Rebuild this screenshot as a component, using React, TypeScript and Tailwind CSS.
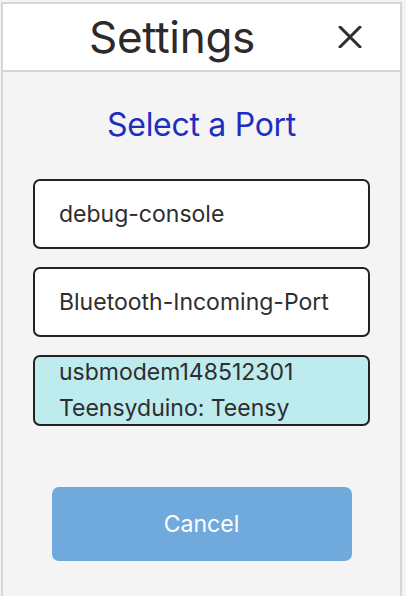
import React from "react"

const ports = [
  { id: "debug", lines: ["debug-console"] },
  { id: "bt", lines: ["Bluetooth-Incoming-Port"] },
  { id: "usb", lines: ["usbmodem148512301", "Teensyduino: Teensy"], selected: true },
]

export default function App() {
  return (
    <div
      className="h-[596px] w-[406px] bg-[#f4f4f4] pt-[2px] pl-[1px]"
      style={{ fontFamily: "Inter, 'Noto Sans', sans-serif" }}
    >
      <div className="flex h-[594px] w-[401px] flex-col border-t-2 border-r-2 border-l-2 border-[#d6d6d6]">
        <div className="flex h-[68px] items-center border-b-2 border-[#d6d6d6] bg-white">
          <div className="flex-1 pl-[3px] text-center text-[44px] leading-none tracking-[-0.3px] text-[#2b2b2b]">
            Settings
          </div>
          <button className="mr-[38px] flex h-[24px] w-[24px] items-center justify-center text-[#2f2f2f]">
            <svg width="24" height="22" viewBox="0 0 24 22" fill="none">
              <path d="M2 1 L22 21 M22 1 L2 21" stroke="currentColor" strokeWidth="3" strokeLinecap="round" />
            </svg>
          </button>
        </div>

        <div className="flex flex-1 flex-col items-center">
          <h2 className="mt-[37px] text-[32px] leading-none tracking-[-0.3px] text-[#1d2fbf]">Select a Port</h2>

          <div className="mt-[38px] flex w-[337px] flex-col gap-[18px]">
            {ports.map((p) =>
              p.selected ? (
                <div
                  key={p.id}
                  className="flex h-[71px] flex-col rounded-[7px] border-2 border-[#222] bg-[#bdebee] pl-[24px] text-[23px] leading-[36px] text-[#2e2e2e]"
                >
                  <div className="-mt-[3px]">{p.lines[0]}</div>
                  <div>{p.lines[1]}</div>
                </div>
              ) : (
                <div
                  key={p.id}
                  className="flex h-[70px] items-center rounded-[7px] border-2 border-[#222] bg-white pl-[24px] text-[23px] text-[#2e2e2e]"
                >
                  {p.lines[0]}
                </div>
              )
            )}
          </div>

          <button className="mt-[61px] h-[74px] w-[300px] rounded-[7px] bg-[#70aadd] text-[23px] text-white">
            Cancel
          </button>
        </div>
      </div>
    </div>
  )
}
